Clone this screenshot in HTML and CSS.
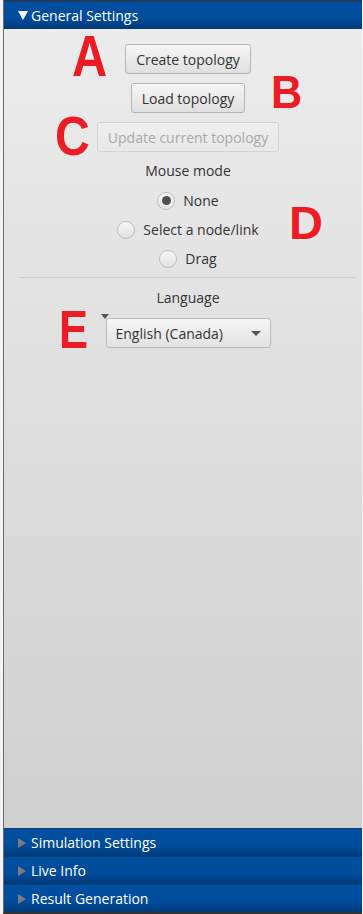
FILE: index.html
```html
<!DOCTYPE html>
<html lang="en">
<head>
    <meta charset="UTF-8">
    <meta name="viewport" content="width=device-width, initial-scale=1.0">
    <title>Settings Panel</title>
    <link rel="stylesheet" href="styles.css">
</head>
<body>
    <div class="app">
        <div class="accordion">
            <!-- Expanded pane -->
            <div class="pane-title expanded"><span class="arrow-down"></span>General Settings</div>
            <div class="pane-content">
                <button class="btn">Create topology</button>
                <button class="btn">Load topology</button>
                <button class="btn" disabled>Update current topology</button>

                <div class="group-label">Mouse mode</div>
                <div class="radio-list">
                    <label class="radio"><span class="dot checked"></span>None</label>
                    <label class="radio"><span class="dot"></span>Select a node/link</label>
                    <label class="radio"><span class="dot"></span>Drag</label>
                </div>

                <hr class="separator">

                <div class="group-label lang-label">Language</div>
                <div class="combo-wrap">
                    <span class="corner-mark"></span>
                    <div class="combo">
                        <span>English (Canada)</span>
                        <span class="combo-arrow"></span>
                    </div>
                </div>

                <!-- Annotation letters -->
                <span class="mark mark-a">A</span>
                <span class="mark mark-b">B</span>
                <span class="mark mark-c">C</span>
                <span class="mark mark-d">D</span>
                <span class="mark mark-e">E</span>
            </div>

            <!-- Collapsed panes -->
            <div class="pane-title"><span class="arrow-right"></span>Simulation Settings</div>
            <div class="pane-title"><span class="arrow-right"></span>Live Info</div>
            <div class="pane-title"><span class="arrow-right"></span>Result Generation</div>
        </div>
    </div>
</body>
</html>
```

FILE: styles.css
```css
/* Global */
body {
    margin: 0;
    font-family: "Open Sans", "Noto Sans", sans-serif;
    font-size: 14px;
    color: #333;
}

.app {
    display: flex;
    height: 914px;
    background: #f3f3f3;
    padding-left: 3px;
    box-sizing: border-box;
}

.accordion {
    flex: 1;
    display: flex;
    flex-direction: column;
    border-left: 1px solid #6b6b6b;
    margin-right: 1px;
    border-bottom: 2px solid #333;
}

/* Title bars */
.pane-title {
    height: 28px;
    box-sizing: border-box;
    display: flex;
    align-items: center;
    padding-left: 14px;
    color: #fff;
    background: linear-gradient(to bottom, #004fa1 0%, #004c9c 60%, #003a78 100%);
    border-top: 1px solid #0a3f7a;
}
.pane-title.expanded {
    border-top: 2px solid #1f3a5c;
    height: 29px;
}

.arrow-down {
    width: 0;
    height: 0;
    border-left: 5px solid transparent;
    border-right: 5px solid transparent;
    border-top: 9px solid #fff;
    margin-right: 3px;
}
.arrow-right {
    width: 0;
    height: 0;
    border-top: 5px solid transparent;
    border-bottom: 5px solid transparent;
    border-left: 8px solid #7c7c7c;
    margin-right: 5px;
}

/* Content */
.pane-content {
    position: relative;
    flex: 1;
    display: flex;
    flex-direction: column;
    align-items: center;
    padding: 15px 0 0 10px;
    background: linear-gradient(to bottom, #ececec 0%, #d0d0d0 100%);
}

.btn {
    font-family: inherit;
    font-size: 14px;
    color: #333;
    height: 30px;
    padding: 0 10px;
    margin-bottom: 9px;
    border: 1px solid #b4b4b4;
    border-radius: 3px;
    background: linear-gradient(to bottom, #f6f6f6, #e0e0e0);
}
.btn:disabled {
    color: #a9a9a9;
    border-color: #d4d4d4;
    background: linear-gradient(to bottom, #efefef, #e8e8e8);
}

.group-label {
    line-height: 20px;
}

.radio-list {
    display: flex;
    flex-direction: column;
    align-items: center;
    margin-top: 5px;
}
.radio {
    display: flex;
    align-items: center;
    height: 29px;
}
.dot {
    width: 18px;
    height: 18px;
    box-sizing: border-box;
    border: 1px solid #bdbdbd;
    border-radius: 50%;
    background: linear-gradient(to bottom, #f7f7f7, #e2e2e2);
    margin-right: 8px;
    display: flex;
    align-items: center;
    justify-content: center;
}
.dot.checked::after {
    content: "";
    width: 9px;
    height: 9px;
    border-radius: 50%;
    background: #4f4f4f;
}

.separator {
    align-self: stretch;
    margin: 4px 6px 0 5px;
    border: none;
    border-top: 1px solid #cfcfcf;
}

.lang-label {
    margin-top: 10px;
}

.combo-wrap {
    position: relative;
    margin-top: 10px;
}
.corner-mark {
    position: absolute;
    left: -5px;
    top: -4px;
    width: 0;
    height: 0;
    border-left: 4px solid transparent;
    border-right: 4px solid transparent;
    border-top: 5px solid #555;
}
.combo {
    width: 165px;
    height: 30px;
    box-sizing: border-box;
    display: flex;
    align-items: center;
    justify-content: space-between;
    padding: 0 9px 0 9px;
    border: 1px solid #b9b9b9;
    border-radius: 3px;
    background: linear-gradient(to bottom, #f6f6f6, #e2e2e2);
}
.combo-arrow {
    width: 0;
    height: 0;
    border-left: 5px solid transparent;
    border-right: 5px solid transparent;
    border-top: 5px solid #555;
}

/* Red annotation letters */
.mark {
    position: absolute;
    font-family: "Liberation Sans", Arial, sans-serif;
    font-weight: bold;
    line-height: 1;
    color: #ec1c24;
    transform-origin: left top;
}
.mark-a { font-size: 58px; left: 68px; top: -2px; transform: scaleX(0.84); }
.mark-b { font-size: 47px; left: 267px; top: 39px; transform: scaleX(0.92); }
.mark-c { font-size: 56px; left: 51px; top: 79px; transform: scaleX(0.86); }
.mark-d { font-size: 47px; left: 285px; top: 170px; }
.mark-e { font-size: 53px; left: 55px; top: 274px; transform: scaleX(0.82); }
```
